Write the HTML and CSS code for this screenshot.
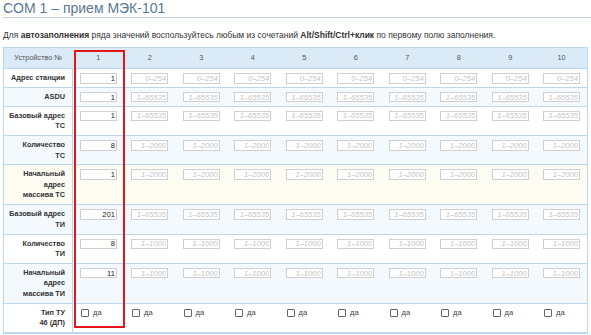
FILE: index.html
```html
<!DOCTYPE html>
<html lang="ru">
<head>
    <meta charset="UTF-8">
    <meta name="viewport" content="width=device-width, initial-scale=1.0">
    <title>COM 1 – прием МЭК-101</title>
    <link rel="stylesheet" href="styles.css">
</head>
<body>
    <h1 class="title">COM 1 – прием МЭК-101</h1>
    <p class="hint">Для <b>автозаполнения</b> ряда значений воспользуйтесь любым из сочетаний <b>Alt/Shift/Ctrl+клик</b> по первому полю заполнения.</p>

    <div class="grid-wrap">
    <table class="devices">
        <colgroup>
            <col class="col-label">
            <col><col><col><col><col><col><col><col><col><col>
        </colgroup>
        <thead>
            <tr>
                <th>Устройство №</th>
                <th>1</th><th>2</th><th>3</th><th>4</th><th>5</th>
                <th>6</th><th>7</th><th>8</th><th>9</th><th>10</th>
            </tr>
        </thead>
        <tbody>
            <tr>
                <th>Адрес станции</th>
                <td><input class="num" type="text" value="1"></td>
                <td><input class="num" type="text" placeholder="0–254"></td>
                <td><input class="num" type="text" placeholder="0–254"></td>
                <td><input class="num" type="text" placeholder="0–254"></td>
                <td><input class="num" type="text" placeholder="0–254"></td>
                <td><input class="num" type="text" placeholder="0–254"></td>
                <td><input class="num" type="text" placeholder="0–254"></td>
                <td><input class="num" type="text" placeholder="0–254"></td>
                <td><input class="num" type="text" placeholder="0–254"></td>
                <td><input class="num" type="text" placeholder="0–254"></td>
            </tr>
            <tr>
                <th>ASDU</th>
                <td><input class="num" type="text" value="1"></td>
                <td><input class="num" type="text" placeholder="1–65535"></td>
                <td><input class="num" type="text" placeholder="1–65535"></td>
                <td><input class="num" type="text" placeholder="1–65535"></td>
                <td><input class="num" type="text" placeholder="1–65535"></td>
                <td><input class="num" type="text" placeholder="1–65535"></td>
                <td><input class="num" type="text" placeholder="1–65535"></td>
                <td><input class="num" type="text" placeholder="1–65535"></td>
                <td><input class="num" type="text" placeholder="1–65535"></td>
                <td><input class="num" type="text" placeholder="1–65535"></td>
            </tr>
            <tr>
                <th>Базовый адрес<br>ТС</th>
                <td><input class="num" type="text" value="1"></td>
                <td><input class="num" type="text" placeholder="1–65535"></td>
                <td><input class="num" type="text" placeholder="1–65535"></td>
                <td><input class="num" type="text" placeholder="1–65535"></td>
                <td><input class="num" type="text" placeholder="1–65535"></td>
                <td><input class="num" type="text" placeholder="1–65535"></td>
                <td><input class="num" type="text" placeholder="1–65535"></td>
                <td><input class="num" type="text" placeholder="1–65535"></td>
                <td><input class="num" type="text" placeholder="1–65535"></td>
                <td><input class="num" type="text" placeholder="1–65535"></td>
            </tr>
            <tr>
                <th>Количество<br>ТС</th>
                <td><input class="num" type="text" value="8"></td>
                <td><input class="num" type="text" placeholder="1–2000"></td>
                <td><input class="num" type="text" placeholder="1–2000"></td>
                <td><input class="num" type="text" placeholder="1–2000"></td>
                <td><input class="num" type="text" placeholder="1–2000"></td>
                <td><input class="num" type="text" placeholder="1–2000"></td>
                <td><input class="num" type="text" placeholder="1–2000"></td>
                <td><input class="num" type="text" placeholder="1–2000"></td>
                <td><input class="num" type="text" placeholder="1–2000"></td>
                <td><input class="num" type="text" placeholder="1–2000"></td>
            </tr>
            <tr class="is-hover">
                <th>Начальный<br>адрес<br>массива ТС</th>
                <td><input class="num" type="text" value="1"></td>
                <td><input class="num" type="text" placeholder="1–2000"></td>
                <td><input class="num" type="text" placeholder="1–2000"></td>
                <td><input class="num" type="text" placeholder="1–2000"></td>
                <td><input class="num" type="text" placeholder="1–2000"></td>
                <td><input class="num" type="text" placeholder="1–2000"></td>
                <td><input class="num" type="text" placeholder="1–2000"></td>
                <td><input class="num" type="text" placeholder="1–2000"></td>
                <td><input class="num" type="text" placeholder="1–2000"></td>
                <td><input class="num" type="text" placeholder="1–2000"></td>
            </tr>
            <tr>
                <th>Базовый адрес<br>ТИ</th>
                <td><input class="num" type="text" value="201"></td>
                <td><input class="num" type="text" placeholder="1–65535"></td>
                <td><input class="num" type="text" placeholder="1–65535"></td>
                <td><input class="num" type="text" placeholder="1–65535"></td>
                <td><input class="num" type="text" placeholder="1–65535"></td>
                <td><input class="num" type="text" placeholder="1–65535"></td>
                <td><input class="num" type="text" placeholder="1–65535"></td>
                <td><input class="num" type="text" placeholder="1–65535"></td>
                <td><input class="num" type="text" placeholder="1–65535"></td>
                <td><input class="num" type="text" placeholder="1–65535"></td>
            </tr>
            <tr>
                <th>Количество<br>ТИ</th>
                <td><input class="num" type="text" value="8"></td>
                <td><input class="num" type="text" placeholder="1–1000"></td>
                <td><input class="num" type="text" placeholder="1–1000"></td>
                <td><input class="num" type="text" placeholder="1–1000"></td>
                <td><input class="num" type="text" placeholder="1–1000"></td>
                <td><input class="num" type="text" placeholder="1–1000"></td>
                <td><input class="num" type="text" placeholder="1–1000"></td>
                <td><input class="num" type="text" placeholder="1–1000"></td>
                <td><input class="num" type="text" placeholder="1–1000"></td>
                <td><input class="num" type="text" placeholder="1–1000"></td>
            </tr>
            <tr>
                <th>Начальный<br>адрес<br>массива ТИ</th>
                <td><input class="num" type="text" value="11"></td>
                <td><input class="num" type="text" placeholder="1–1000"></td>
                <td><input class="num" type="text" placeholder="1–1000"></td>
                <td><input class="num" type="text" placeholder="1–1000"></td>
                <td><input class="num" type="text" placeholder="1–1000"></td>
                <td><input class="num" type="text" placeholder="1–1000"></td>
                <td><input class="num" type="text" placeholder="1–1000"></td>
                <td><input class="num" type="text" placeholder="1–1000"></td>
                <td><input class="num" type="text" placeholder="1–1000"></td>
                <td><input class="num" type="text" placeholder="1–1000"></td>
            </tr>
            <tr>
                <th>Тип ТУ<br>46 (ДП)</th>
                <td><label class="check"><input type="checkbox">да</label></td>
                <td><label class="check"><input type="checkbox">да</label></td>
                <td><label class="check"><input type="checkbox">да</label></td>
                <td><label class="check"><input type="checkbox">да</label></td>
                <td><label class="check"><input type="checkbox">да</label></td>
                <td><label class="check"><input type="checkbox">да</label></td>
                <td><label class="check"><input type="checkbox">да</label></td>
                <td><label class="check"><input type="checkbox">да</label></td>
                <td><label class="check"><input type="checkbox">да</label></td>
                <td><label class="check"><input type="checkbox">да</label></td>
            </tr>
        </tbody>
    </table>
    <div class="col-mark"></div>
    </div>
</body>
</html>
```

FILE: styles.css
```css
html, body {
    margin: 0;
    padding: 0;
    background-color: white;
}

body {
    padding: 0 0 0 3px;
    font-family: "Liberation Sans", Arial, sans-serif;
    color: #333;
    overflow: hidden;
}

.title {
    margin: 0;
    font-size: 14px;
    line-height: 17px;
    font-weight: normal;
    color: #5b7894;
    border-bottom: 1px solid #c9d1da;
}

.hint {
    margin: 12px 0 6px;
    font-size: 8.5px;
    line-height: 11px;
    color: #333;
}

.grid-wrap {
    position: relative;
    width: 585px;
}

.devices {
    width: 585px;
    border-collapse: collapse;
    table-layout: fixed;
    border: 1px solid #bcd8ef;
    border-bottom-width: 2px;
    font-size: 7.3px;
    line-height: 10.5px;
}

.col-label {
    width: 69px;
}

.devices th,
.devices td {
    padding: 4px 0 3.35px;
    vertical-align: top;
    border-top: 1px solid #bcd8ef;
}

.devices thead th {
    padding: 5px 0 4.5px;
    background-color: #dbeaf7;
    font-weight: normal;
    color: #555;
    text-align: center;
    vertical-align: middle;
}

.devices tbody th {
    padding-right: 7px;
    text-align: right;
    font-weight: bold;
    color: #333;
    border-right: 1px solid #bcd8ef;
}

.devices tbody tr:nth-child(even) {
    background-color: #f4f9fe;
}

.devices tbody tr.is-hover {
    background-color: #fcfcf3;
}

.num {
    display: block;
    box-sizing: border-box;
    width: 37px;
    height: 10.5px;
    margin: 0 auto;
    padding: 0 1px 0 2px;
    border: 1px solid #cfcfcf;
    background: white;
    font-family: inherit;
    font-size: 7.6px;
    line-height: 8.5px;
    color: #222;
    text-align: right;
}

.num::placeholder {
    color: #c4c4c4;
    font-style: italic;
}

.check {
    display: flex;
    align-items: center;
    gap: 4px;
    padding-left: 8px;
    font-size: 7.6px;
    color: #444;
}

.check input {
    appearance: none;
    margin: 0;
    width: 8px;
    height: 8px;
    border: 1px solid #666;
    border-radius: 1px;
    background: white;
}

.col-mark {
    position: absolute;
    left: 71px;
    top: 3px;
    width: 51px;
    height: 278px;
    box-sizing: border-box;
    border: 2px solid #e3161b;
    pointer-events: none;
}
```
